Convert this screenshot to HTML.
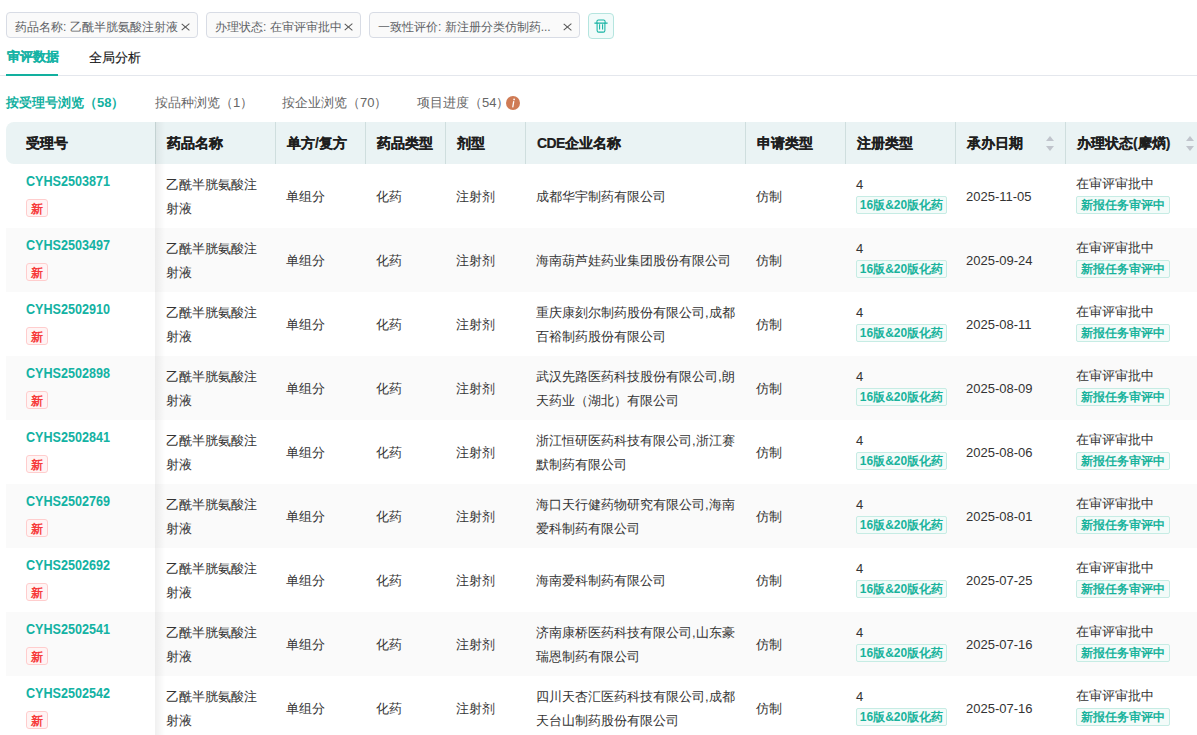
<!DOCTYPE html><html><head><meta charset="utf-8"><style>*{margin:0;padding:0;box-sizing:border-box}
html,body{width:1197px;height:735px;overflow:hidden;background:#fff}
body{position:relative;font-family:"Liberation Sans",sans-serif;font-size:13px;color:#333}
.tag{position:absolute;top:12px;height:26px;border:1px solid #d8dce5;border-radius:4px;background:#fafafa;color:#606266;font-size:12px;line-height:28px;padding-left:8px;white-space:nowrap}
.tag .x{position:absolute;right:7px;top:10px;width:9px;height:7px}
.tag .x:before,.tag .x:after{content:"";position:absolute;left:3.8px;top:-1.5px;width:1.3px;height:10px;background:#555;transform:rotate(50deg)}
.tag .x:after{transform:rotate(-50deg)}
.trash{position:absolute;left:588px;top:13px;width:26px;height:26px;border:1px solid #b5e5df;border-radius:4px;background:#f1fbfa}
.tab1{position:absolute;left:7px;top:49px;font-size:13px;line-height:16px;font-weight:bold;color:#15b3a5;-webkit-text-stroke:0.12px #15b3a5}
.tab2{position:absolute;left:89px;top:50px;font-size:13px;line-height:16px;color:#1a1a1a;font-weight:normal;-webkit-text-stroke:0.15px #1a1a1a}
.tabline{position:absolute;left:0;top:75px;width:1197px;height:1px;background:#e4e7ed}
.tabbar{position:absolute;left:6px;top:74px;width:52px;height:2px;background:#12b09f}
.st{position:absolute;top:95px;line-height:16px;font-size:13px;color:#666;white-space:nowrap}
.st1{left:6px;color:#12b09f;font-weight:bold}
.info{position:absolute;left:506px;top:96px;width:14px;height:14px}
.thead{position:absolute;left:6px;top:122px;width:1220px;height:42px;background:#eaf3f4;border-radius:8px 0 0 8px}
.th{position:absolute;top:0;height:42px;line-height:42px;font-weight:bold;font-size:14px;color:#1e1e1e;-webkit-text-stroke:0.2px #1e1e1e;white-space:nowrap;border-left:1px solid #cfdede}
.th:first-child{border-left:none}
.sort{position:absolute;top:14px;width:9px;height:15px}
.sort .up{position:absolute;left:0;top:0px;border-left:4.5px solid transparent;border-right:4.5px solid transparent;border-bottom:5px solid #c0c4cc}
.sort .dn{position:absolute;left:0;top:9.5px;border-left:4.5px solid transparent;border-right:4.5px solid transparent;border-top:5px solid #c0c4cc}
.fixsh{position:absolute;left:149px;top:0;width:10px;height:64px;background:linear-gradient(to right,rgba(0,0,0,.06),rgba(0,0,0,0))}
.row{position:absolute;left:6px;width:1220px;height:64px}
.row.odd{background:#fafafa}
.row.even{background:#fff}
.c0{position:absolute;left:0;top:0;width:149px;height:64px}
.no{position:absolute;left:20px;top:9px;line-height:16px;font-weight:bold;color:#14b2a3;font-size:14px;transform:scaleX(0.9);transform-origin:0 0}
.new{position:absolute;left:20px;top:35px;width:22px;height:18px;border:1px solid #ffcdcd;background:#fff4f4;color:#f63b3b;font-size:12px;line-height:18px;text-align:center;border-radius:3px;font-weight:bold}
.c{position:absolute;padding-left:11px;white-space:nowrap;font-size:13px;color:#333}
.cc{top:24.6px;line-height:16px}
.gt{position:absolute;margin-left:11px;height:18px;line-height:17px;padding:0;text-align:center;border:1px solid #c6ece4;background:#f3fbf9;color:#19b39c;font-weight:bold;font-size:12px;border-radius:2px;white-space:nowrap}
</style></head><body>
<div class="tag" style="left:6px;width:192px">药品名称: 乙酰半胱氨酸注射液<span class="x"></span></div>
<div class="tag" style="left:206px;width:155px">办理状态: 在审评审批中<span class="x"></span></div>
<div class="tag" style="left:369px;width:211px">一致性评价: 新注册分类仿制药...<span class="x"></span></div>
<div class="trash"><svg width="26" height="26" viewBox="0 0 26 26" style="position:absolute;left:-1px;top:-1px"><path d="M8.9 10V8.4Q8.9 6.9 10.4 6.9H15.6Q17.1 6.9 17.1 8.4V10M6.4 10.1H19.6M9.1 10.2V17.4Q9.1 19.1 10.8 19.1H15.2Q16.9 19.1 16.9 17.4V10.2M11.6 11.2V16.4M14.6 11.2V16.4" fill="none" stroke="#14b3a3" stroke-width="1.05"/></svg></div>
<div class="tab1">审评数据</div><div class="tab2">全局分析</div>
<div class="tabline"></div><div class="tabbar"></div>
<div class="st st1">按受理号浏览（58）</div>
<div class="st" style="left:155px">按品种浏览（1）</div>
<div class="st" style="left:282px">按企业浏览（70）</div>
<div class="st" style="left:417px">项目进度（54）</div>
<svg class="info" width="14" height="14" viewBox="0 0 14 14"><circle cx="7" cy="7" r="7" fill="#cf7b55"/><path d="M7.7 5.6L6.8 10.9" stroke="#fff" stroke-width="1.3" stroke-linecap="round"/><circle cx="8.1" cy="3.4" r="0.85" fill="#fff"/></svg>

<div class="thead">
<div class="th" style="left:0px;width:149px;padding-left:20px">受理号</div>
<div class="th" style="left:149px;width:120px;padding-left:11px">药品名称</div>
<div class="th" style="left:269px;width:90px;padding-left:11px">单方/复方</div>
<div class="th" style="left:359px;width:80px;padding-left:11px">药品类型</div>
<div class="th" style="left:439px;width:80px;padding-left:11px">剂型</div>
<div class="th" style="left:519px;width:220px;padding-left:11px"><span style="letter-spacing:-0.6px">CDE</span>企业名称</div>
<div class="th" style="left:739px;width:100px;padding-left:11px">申请类型</div>
<div class="th" style="left:839px;width:110px;padding-left:11px">注册类型</div>
<div class="th" style="left:949px;width:110px;padding-left:11px">承办日期<span class="sort" style="left:90px"><i class="up"></i><i class="dn"></i></span></div>
<div class="th" style="left:1059px;width:150px;padding-left:11px">办理状态(摩焫)<span class="sort" style="left:120px"><i class="up"></i><i class="dn"></i></span></div>
<div class="fixsh" style="height:42px"></div>
</div>
<div class="row even" style="top:164px">
<div class="c0"><div class="no">CYHS2503871</div><div class="new">新</div></div>
<div class="c" style="left:149px;top:8.6px;line-height:24px">乙酰半胱氨酸注<br>射液</div>
<div class="c cc" style="left:269px">单组分</div>
<div class="c cc" style="left:359px">化药</div>
<div class="c cc" style="left:439px">注射剂</div>
<div class="c cc" style="left:519px">成都华宇制药有限公司</div>
<div class="c cc" style="left:739px">仿制</div>
<div class="c" style="left:839px;top:13px;line-height:16px">4</div><div class="gt" style="left:839px;top:32px;width:91px">16版&amp;20版化药</div>
<div class="c cc date" style="left:949px;top:25px">2025-11-05</div>
<div class="c" style="left:1059px;top:12px;line-height:16px">在审评审批中</div><div class="gt" style="left:1059px;top:32px;width:94px">新报任务审评中</div>
<div class="fixsh"></div>
</div>
<div class="row odd" style="top:228px">
<div class="c0"><div class="no">CYHS2503497</div><div class="new">新</div></div>
<div class="c" style="left:149px;top:8.6px;line-height:24px">乙酰半胱氨酸注<br>射液</div>
<div class="c cc" style="left:269px">单组分</div>
<div class="c cc" style="left:359px">化药</div>
<div class="c cc" style="left:439px">注射剂</div>
<div class="c cc" style="left:519px">海南葫芦娃药业集团股份有限公司</div>
<div class="c cc" style="left:739px">仿制</div>
<div class="c" style="left:839px;top:13px;line-height:16px">4</div><div class="gt" style="left:839px;top:32px;width:91px">16版&amp;20版化药</div>
<div class="c cc date" style="left:949px;top:25px">2025-09-24</div>
<div class="c" style="left:1059px;top:12px;line-height:16px">在审评审批中</div><div class="gt" style="left:1059px;top:32px;width:94px">新报任务审评中</div>
<div class="fixsh"></div>
</div>
<div class="row even" style="top:292px">
<div class="c0"><div class="no">CYHS2502910</div><div class="new">新</div></div>
<div class="c" style="left:149px;top:8.6px;line-height:24px">乙酰半胱氨酸注<br>射液</div>
<div class="c cc" style="left:269px">单组分</div>
<div class="c cc" style="left:359px">化药</div>
<div class="c cc" style="left:439px">注射剂</div>
<div class="c" style="left:519px;top:8.6px;line-height:24px">重庆康刻尔制药股份有限公司,成都<br>百裕制药股份有限公司</div>
<div class="c cc" style="left:739px">仿制</div>
<div class="c" style="left:839px;top:13px;line-height:16px">4</div><div class="gt" style="left:839px;top:32px;width:91px">16版&amp;20版化药</div>
<div class="c cc date" style="left:949px;top:25px">2025-08-11</div>
<div class="c" style="left:1059px;top:12px;line-height:16px">在审评审批中</div><div class="gt" style="left:1059px;top:32px;width:94px">新报任务审评中</div>
<div class="fixsh"></div>
</div>
<div class="row odd" style="top:356px">
<div class="c0"><div class="no">CYHS2502898</div><div class="new">新</div></div>
<div class="c" style="left:149px;top:8.6px;line-height:24px">乙酰半胱氨酸注<br>射液</div>
<div class="c cc" style="left:269px">单组分</div>
<div class="c cc" style="left:359px">化药</div>
<div class="c cc" style="left:439px">注射剂</div>
<div class="c" style="left:519px;top:8.6px;line-height:24px">武汉先路医药科技股份有限公司,朗<br>天药业（湖北）有限公司</div>
<div class="c cc" style="left:739px">仿制</div>
<div class="c" style="left:839px;top:13px;line-height:16px">4</div><div class="gt" style="left:839px;top:32px;width:91px">16版&amp;20版化药</div>
<div class="c cc date" style="left:949px;top:25px">2025-08-09</div>
<div class="c" style="left:1059px;top:12px;line-height:16px">在审评审批中</div><div class="gt" style="left:1059px;top:32px;width:94px">新报任务审评中</div>
<div class="fixsh"></div>
</div>
<div class="row even" style="top:420px">
<div class="c0"><div class="no">CYHS2502841</div><div class="new">新</div></div>
<div class="c" style="left:149px;top:8.6px;line-height:24px">乙酰半胱氨酸注<br>射液</div>
<div class="c cc" style="left:269px">单组分</div>
<div class="c cc" style="left:359px">化药</div>
<div class="c cc" style="left:439px">注射剂</div>
<div class="c" style="left:519px;top:8.6px;line-height:24px">浙江恒研医药科技有限公司,浙江赛<br>默制药有限公司</div>
<div class="c cc" style="left:739px">仿制</div>
<div class="c" style="left:839px;top:13px;line-height:16px">4</div><div class="gt" style="left:839px;top:32px;width:91px">16版&amp;20版化药</div>
<div class="c cc date" style="left:949px;top:25px">2025-08-06</div>
<div class="c" style="left:1059px;top:12px;line-height:16px">在审评审批中</div><div class="gt" style="left:1059px;top:32px;width:94px">新报任务审评中</div>
<div class="fixsh"></div>
</div>
<div class="row odd" style="top:484px">
<div class="c0"><div class="no">CYHS2502769</div><div class="new">新</div></div>
<div class="c" style="left:149px;top:8.6px;line-height:24px">乙酰半胱氨酸注<br>射液</div>
<div class="c cc" style="left:269px">单组分</div>
<div class="c cc" style="left:359px">化药</div>
<div class="c cc" style="left:439px">注射剂</div>
<div class="c" style="left:519px;top:8.6px;line-height:24px">海口天行健药物研究有限公司,海南<br>爱科制药有限公司</div>
<div class="c cc" style="left:739px">仿制</div>
<div class="c" style="left:839px;top:13px;line-height:16px">4</div><div class="gt" style="left:839px;top:32px;width:91px">16版&amp;20版化药</div>
<div class="c cc date" style="left:949px;top:25px">2025-08-01</div>
<div class="c" style="left:1059px;top:12px;line-height:16px">在审评审批中</div><div class="gt" style="left:1059px;top:32px;width:94px">新报任务审评中</div>
<div class="fixsh"></div>
</div>
<div class="row even" style="top:548px">
<div class="c0"><div class="no">CYHS2502692</div><div class="new">新</div></div>
<div class="c" style="left:149px;top:8.6px;line-height:24px">乙酰半胱氨酸注<br>射液</div>
<div class="c cc" style="left:269px">单组分</div>
<div class="c cc" style="left:359px">化药</div>
<div class="c cc" style="left:439px">注射剂</div>
<div class="c cc" style="left:519px">海南爱科制药有限公司</div>
<div class="c cc" style="left:739px">仿制</div>
<div class="c" style="left:839px;top:13px;line-height:16px">4</div><div class="gt" style="left:839px;top:32px;width:91px">16版&amp;20版化药</div>
<div class="c cc date" style="left:949px;top:25px">2025-07-25</div>
<div class="c" style="left:1059px;top:12px;line-height:16px">在审评审批中</div><div class="gt" style="left:1059px;top:32px;width:94px">新报任务审评中</div>
<div class="fixsh"></div>
</div>
<div class="row odd" style="top:612px">
<div class="c0"><div class="no">CYHS2502541</div><div class="new">新</div></div>
<div class="c" style="left:149px;top:8.6px;line-height:24px">乙酰半胱氨酸注<br>射液</div>
<div class="c cc" style="left:269px">单组分</div>
<div class="c cc" style="left:359px">化药</div>
<div class="c cc" style="left:439px">注射剂</div>
<div class="c" style="left:519px;top:8.6px;line-height:24px">济南康桥医药科技有限公司,山东豪<br>瑞恩制药有限公司</div>
<div class="c cc" style="left:739px">仿制</div>
<div class="c" style="left:839px;top:13px;line-height:16px">4</div><div class="gt" style="left:839px;top:32px;width:91px">16版&amp;20版化药</div>
<div class="c cc date" style="left:949px;top:25px">2025-07-16</div>
<div class="c" style="left:1059px;top:12px;line-height:16px">在审评审批中</div><div class="gt" style="left:1059px;top:32px;width:94px">新报任务审评中</div>
<div class="fixsh"></div>
</div>
<div class="row even" style="top:676px">
<div class="c0"><div class="no">CYHS2502542</div><div class="new">新</div></div>
<div class="c" style="left:149px;top:8.6px;line-height:24px">乙酰半胱氨酸注<br>射液</div>
<div class="c cc" style="left:269px">单组分</div>
<div class="c cc" style="left:359px">化药</div>
<div class="c cc" style="left:439px">注射剂</div>
<div class="c" style="left:519px;top:8.6px;line-height:24px">四川天杏汇医药科技有限公司,成都<br>天台山制药股份有限公司</div>
<div class="c cc" style="left:739px">仿制</div>
<div class="c" style="left:839px;top:13px;line-height:16px">4</div><div class="gt" style="left:839px;top:32px;width:91px">16版&amp;20版化药</div>
<div class="c cc date" style="left:949px;top:25px">2025-07-16</div>
<div class="c" style="left:1059px;top:12px;line-height:16px">在审评审批中</div><div class="gt" style="left:1059px;top:32px;width:94px">新报任务审评中</div>
<div class="fixsh"></div>
</div>
</body></html>
